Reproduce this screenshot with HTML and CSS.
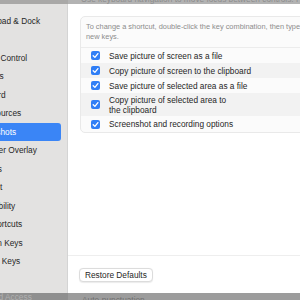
FILE: index.html
```html
<!DOCTYPE html>
<html>
<head>
<meta charset="utf-8">
<link rel="stylesheet" href="styles.css">
</head>
<body>
<div class="screen">
  <div class="topstrip">
    <div class="top-left"></div>
    <div class="top-right"><div class="top-text">Use keyboard navigation to move focus between controls. Press the Tab key</div></div>
  </div>
  <div class="sheet">
    <div class="sidebar">
      <div class="nav">
        <div class="item">Launchpad &amp; Dock</div>
        <div class="item">Display</div>
        <div class="item">Mission Control</div>
        <div class="item">Windows</div>
        <div class="item">Keyboard</div>
        <div class="item">Input Sources</div>
        <div class="item active">Screenshots</div>
        <div class="item">Presenter Overlay</div>
        <div class="item">Services</div>
        <div class="item">Spotlight</div>
        <div class="item">Accessibility</div>
        <div class="item">App Shortcuts</div>
        <div class="item">Function Keys</div>
        <div class="item">Modifier Keys</div>
      </div>
    </div>
    <div class="main">
      <div class="content">
        <div class="box">
          <div class="hint">To change a shortcut, double-click the key combination, then type the<br>new keys.</div>
          <div class="row">
            <span class="cb"><svg viewBox="0 0 9 9" width="9" height="9"><rect width="9" height="9" rx="2" fill="#2f7ef6"/><path d="M2.2 4.7 L3.9 6.4 L6.9 2.6" fill="none" stroke="#fff" stroke-width="1.3" stroke-linecap="round" stroke-linejoin="round"/></svg></span>
            <span class="label">Save picture of screen as a file</span>
          </div>
          <div class="row stripe">
            <span class="cb"><svg viewBox="0 0 9 9" width="9" height="9"><rect width="9" height="9" rx="2" fill="#2f7ef6"/><path d="M2.2 4.7 L3.9 6.4 L6.9 2.6" fill="none" stroke="#fff" stroke-width="1.3" stroke-linecap="round" stroke-linejoin="round"/></svg></span>
            <span class="label">Copy picture of screen to the clipboard</span>
          </div>
          <div class="row">
            <span class="cb"><svg viewBox="0 0 9 9" width="9" height="9"><rect width="9" height="9" rx="2" fill="#2f7ef6"/><path d="M2.2 4.7 L3.9 6.4 L6.9 2.6" fill="none" stroke="#fff" stroke-width="1.3" stroke-linecap="round" stroke-linejoin="round"/></svg></span>
            <span class="label">Save picture of selected area as a file</span>
          </div>
          <div class="row stripe tall">
            <span class="cb"><svg viewBox="0 0 9 9" width="9" height="9"><rect width="9" height="9" rx="2" fill="#2f7ef6"/><path d="M2.2 4.7 L3.9 6.4 L6.9 2.6" fill="none" stroke="#fff" stroke-width="1.3" stroke-linecap="round" stroke-linejoin="round"/></svg></span>
            <span class="label">Copy picture of selected area to<br>the clipboard</span>
          </div>
          <div class="row last">
            <span class="cb"><svg viewBox="0 0 9 9" width="9" height="9"><rect width="9" height="9" rx="2" fill="#2f7ef6"/><path d="M2.2 4.7 L3.9 6.4 L6.9 2.6" fill="none" stroke="#fff" stroke-width="1.3" stroke-linecap="round" stroke-linejoin="round"/></svg></span>
            <span class="label">Screenshot and recording options</span>
          </div>
        </div>
      </div>
      <div class="footer">
        <button class="btn">Restore Defaults</button>
      </div>
    </div>
  </div>
  <div class="bottomstrip">
    <div class="bot-left"><span class="bot-text-left">Full Keyboard Access</span></div>
    <div class="bot-right"><span class="bot-text-right">Auto-punctuation</span></div>
  </div>
</div>
</body>
</html>
```

FILE: styles.css
```css
html, body {
  margin: 0;
  padding: 0;
}
body {
  width: 300px;
  height: 300px;
  overflow: hidden;
  font-family: "Liberation Sans", Arial, sans-serif;
  background: #ffffff;
}
.screen {
  width: 300px;
  height: 300px;
  display: flex;
  flex-direction: column;
  overflow: hidden;
}
.topstrip {
  height: 4px;
  flex: none;
  display: flex;
  overflow: hidden;
}
.top-left {
  width: 68px;
  background: #a9a8a7;
}
.top-right {
  flex: 1;
  background: #b3b3b3;
  overflow: hidden;
  position: relative;
}
.top-text {
  white-space: nowrap;
  font-size: 8.3px;
  line-height: 10px;
  color: #8d8d8d;
  margin-top: -6px;
  padding-left: 13px;
}
.sheet {
  height: 289px;
  flex: none;
  display: flex;
}
.sidebar {
  width: 67px;
  flex: none;
  background: #e3e2e1;
  border-right: 1px solid #d4d4d4;
  overflow: hidden;
}
.nav {
  margin-left: -40px;
  width: 101px;
  padding-top: 7.75px;
}
.item {
  height: 18.5px;
  line-height: 18.5px;
  padding-left: 10px;
  font-size: 8.3px;
  color: #262626;
  white-space: nowrap;
  border-radius: 3px;
}
.item.active {
  background: #3a85f6;
  color: #ffffff;
}
.main {
  flex: 1;
  display: flex;
  flex-direction: column;
  background: #ffffff;
  overflow: hidden;
}
.content {
  flex: 1;
  padding: 12px 0 0 12px;
}
.box {
  width: 260px;
  border: 1px solid #e9e9e9;
  border-radius: 5px;
  background: #fbfbfb;
  box-sizing: border-box;
  overflow: hidden;
}
.hint {
  font-size: 7.4px;
  line-height: 10px;
  color: #8c8c8c;
  padding: 5px 5px 5px 5px;
  white-space: nowrap;
  border-bottom: 1px solid #ececec;
}
.row {
  display: flex;
  align-items: center;
  height: 15px;
  padding-left: 10px;
  gap: 9px;
}
.row.stripe {
  background: #f2f2f2;
}
.row.tall {
  height: 23px;
}
.row.last {
  height: 16px;
}
.cb {
  width: 9px;
  height: 9px;
  display: flex;
  flex: none;
}
.label {
  font-size: 8.3px;
  line-height: 10px;
  color: #262626;
  white-space: nowrap;
}
.footer {
  height: 38px;
  flex: none;
  border-top: 1px solid #eeeeee;
  box-sizing: border-box;
  padding: 12px 0 0 11px;
}
.btn {
  font-family: "Liberation Sans", Arial, sans-serif;
  font-size: 8.3px;
  color: #262626;
  height: 14px;
  padding: 0 5px;
  background: #ffffff;
  border: 1px solid #dcdcdc;
  border-radius: 4px;
  box-shadow: 0 0.5px 1px rgba(0,0,0,0.08);
  line-height: 12px;
  display: flex;
  align-items: center;
}
.bottomstrip {
  height: 7px;
  flex: none;
  display: flex;
  overflow: hidden;
}
.bot-left {
  width: 68px;
  background: #8f8f8f;
  overflow: hidden;
  white-space: nowrap;
}
.bot-right {
  flex: 1;
  background: #9c9c9c;
  overflow: hidden;
  white-space: nowrap;
  padding-left: 14px;
}
.bot-text-left {
  display: block;
  font-size: 8.3px;
  line-height: 10px;
  color: #b0b0b0;
  margin-left: -48px;
  margin-top: -1px;
}
.bot-text-right {
  display: block;
  font-size: 8.3px;
  line-height: 10px;
  color: #707070;
  margin-top: 2px;
}
```
